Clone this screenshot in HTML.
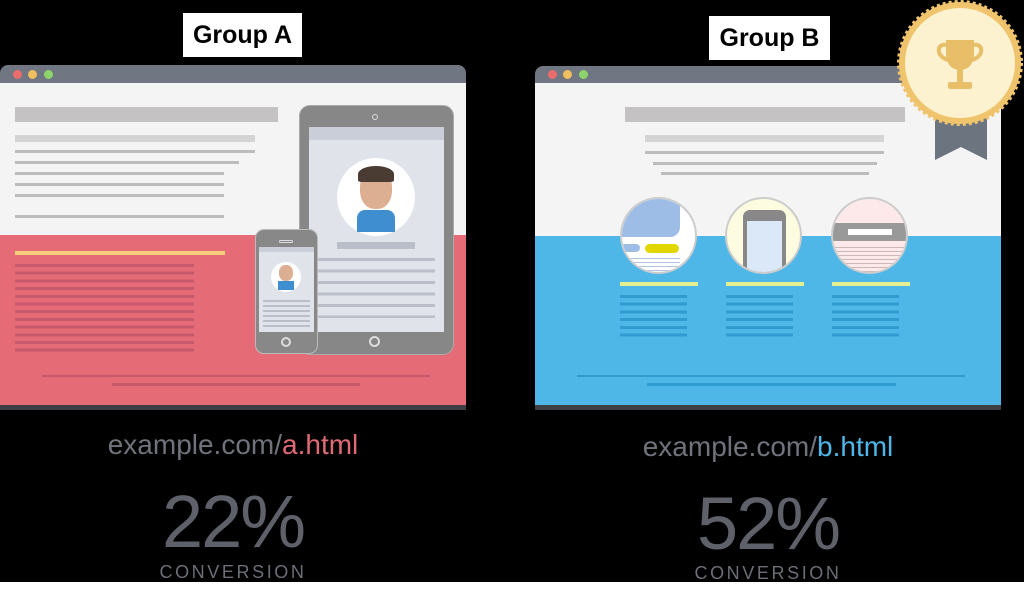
<!DOCTYPE html>
<html><head><style>
*{margin:0;padding:0;box-sizing:border-box}
body{width:1024px;height:601px;background:#fff;position:relative;overflow:hidden;font-family:"Liberation Sans",sans-serif}
#bk{position:absolute;left:0;top:0;width:1024px;height:582px;background:#000}
.a{position:absolute}
.lbl{position:absolute;background:#fff;color:#000;font-weight:bold;font-size:25px;text-align:center;line-height:44px}
.url{position:absolute;width:466px;text-align:center;font-size:28px;color:#70737c;font-weight:300}
.pct{position:absolute;width:466px;text-align:center;font-size:74px;color:#5e6169;font-weight:100;line-height:78px;letter-spacing:-2px}
.conv{position:absolute;width:466px;text-align:center;font-size:18px;color:#6c6f78;letter-spacing:2.6px;line-height:20px}
.dot{position:absolute;width:9px;height:9px;border-radius:50%;top:70px}
</style></head><body>
<div id="bk"></div>
<div class="lbl" style="left:183px;top:13px;width:119px">Group A</div>
<div class="lbl" style="left:709px;top:16px;width:121px">Group B</div>

<!-- left browser -->
<div class="a" style="left:0;top:65px;width:466px;height:20px;background:#707682;border-radius:8px 8px 0 0"></div>
<div class="dot" style="left:13px;background:#ec6b6b"></div><div class="dot" style="left:28px;background:#f0c060"></div><div class="dot" style="left:44px;background:#8ed46c"></div>
<div class="a" style="left:0;top:83px;width:466px;height:152px;background:#f4f4f4"></div>
<div class="a" style="left:0;top:235px;width:466px;height:170px;background:#e56b76"></div>
<div class="a" style="left:0;top:405px;width:466px;height:5px;background:#3d3f44"></div>
<div class="a" style="left:15px;top:107px;width:263px;height:15px;background:#c4c2c2"></div>
<div class="a" style="left:15px;top:135px;width:240px;height:7px;background:#d4d4d4"></div>
<div class="a" style="left:15px;top:150px;width:240px;height:3px;background:#bcbcbc"></div>
<div class="a" style="left:15px;top:161px;width:224px;height:3px;background:#bcbcbc"></div>
<div class="a" style="left:15px;top:172px;width:209px;height:3px;background:#bcbcbc"></div>
<div class="a" style="left:15px;top:183px;width:209px;height:3px;background:#bcbcbc"></div>
<div class="a" style="left:15px;top:194px;width:209px;height:3px;background:#bcbcbc"></div>
<div class="a" style="left:15px;top:215px;width:209px;height:3px;background:#bcbcbc"></div>
<div class="a" style="left:15px;top:251px;width:210px;height:4px;background:#f7cf7c"></div>
<div class="a" style="left:15px;top:264px;width:179px;height:90px;background:repeating-linear-gradient(#c45a6c 0 3px,transparent 3px 7.7px)"></div>
<div class="a" style="left:42px;top:375px;width:388px;height:2px;background:#c45a6c"></div>
<div class="a" style="left:112px;top:383px;width:248px;height:3px;background:#c45a6c"></div>
<!-- tablet -->
<div class="a" style="left:299px;top:105px;width:155px;height:250px;background:#878787;border-radius:11px;border:1px solid #aaa"></div>
<div class="a" style="left:372px;top:114px;width:6px;height:6px;border-radius:50%;border:1px solid #ddd"></div>
<div class="a" style="left:309px;top:127px;width:135px;height:205px;background:#e0e3ea"></div>
<div class="a" style="left:309px;top:127px;width:135px;height:13px;background:#c9ced8"></div>
<div class="a" style="left:337px;top:158px;width:78px;height:78px;border-radius:50%;background:#fff"></div>
<div class="a" style="left:360px;top:169px;width:32px;height:40px;border-radius:45%;background:#dcae92"></div>
<div class="a" style="left:358px;top:166px;width:36px;height:16px;border-radius:50% 50% 10% 10%;background:#4a3b33"></div>
<div class="a" style="left:357px;top:210px;width:38px;height:22px;border-radius:8px 8px 0 0;background:#3f8fd0"></div>
<div class="a" style="left:337px;top:242px;width:78px;height:7px;background:#b9bec8"></div>
<div class="a" style="left:318px;top:258px;width:117px;height:60px;background:repeating-linear-gradient(#b9bec8 0 3px,transparent 3px 11.5px)"></div>
<div class="a" style="left:369px;top:336px;width:11px;height:11px;border-radius:50%;border:2px solid #ddd"></div>
<!-- phone -->
<div class="a" style="left:255px;top:229px;width:63px;height:125px;background:#888;border-radius:9px;border:1px solid #bbb"></div>
<div class="a" style="left:279px;top:240px;width:14px;height:3px;border-radius:2px;border:1px solid #ddd"></div>
<div class="a" style="left:259px;top:247px;width:55px;height:85px;background:#e0e3ea"></div>
<div class="a" style="left:259px;top:247px;width:55px;height:5px;background:#c9ced8"></div>
<div class="a" style="left:271px;top:262px;width:30px;height:30px;border-radius:50%;background:#fff"></div>
<div class="a" style="left:279px;top:265px;width:14px;height:16px;border-radius:45%;background:#dcae92"></div>
<div class="a" style="left:278px;top:281px;width:16px;height:9px;background:#3f8fd0"></div>
<div class="a" style="left:263px;top:300px;width:47px;height:28px;background:repeating-linear-gradient(#b9bec8 0 2px,transparent 2px 5px)"></div>
<div class="a" style="left:281px;top:337px;width:10px;height:10px;border-radius:50%;border:2px solid #ddd"></div>

<!-- right browser -->
<div class="a" style="left:535px;top:66px;width:466px;height:19px;background:#707682;border-radius:8px 8px 0 0"></div>
<div class="dot" style="left:548px;background:#ec6b6b"></div><div class="dot" style="left:563px;background:#f0c060"></div><div class="dot" style="left:579px;background:#8ed46c"></div>
<div class="a" style="left:535px;top:83px;width:466px;height:153px;background:#f4f4f4"></div>
<div class="a" style="left:535px;top:236px;width:466px;height:169px;background:#4fb6e8"></div>
<div class="a" style="left:535px;top:405px;width:466px;height:5px;background:#3d3f44"></div>
<div class="a" style="left:625px;top:107px;width:280px;height:15px;background:#c4c2c2"></div>
<div class="a" style="left:645px;top:135px;width:239px;height:7px;background:#d4d4d4"></div>
<div class="a" style="left:645px;top:151px;width:239px;height:3px;background:#bcbcbc"></div>
<div class="a" style="left:653px;top:162px;width:224px;height:3px;background:#bcbcbc"></div>
<div class="a" style="left:661px;top:172px;width:208px;height:3px;background:#bcbcbc"></div>
<div class="a" style="left:620px;top:197px;width:77px;height:77px;border-radius:50%;background:#fff;border:2px solid #ccc;overflow:hidden">
 <div class="a" style="left:0;top:0;width:58px;height:38px;background:#9dbde6;border-radius:0 0 10px 0"></div>
 <div class="a" style="left:-2px;top:45px;width:20px;height:8px;background:#9dbde6;border-radius:4px"></div>
 <div class="a" style="left:23px;top:45px;width:34px;height:9px;background:#e2d600;border-radius:5px"></div>
 <div class="a" style="left:0;top:59px;width:58px;height:14px;background:repeating-linear-gradient(#b0c4e0 0 1px,transparent 1px 4px)"></div>
</div>
<div class="a" style="left:725px;top:197px;width:77px;height:77px;border-radius:50%;background:#fdfbe0;border:2px solid #ccc;overflow:hidden">
 <div class="a" style="left:16px;top:11px;width:43px;height:70px;background:#888;border-radius:7px"></div>
 <div class="a" style="left:20px;top:22px;width:35px;height:60px;background:#dbe8f8"></div>
</div>
<div class="a" style="left:831px;top:197px;width:77px;height:77px;border-radius:50%;background:#fde9ea;border:2px solid #ccc;overflow:hidden">
 <div class="a" style="left:0;top:24px;width:77px;height:18px;background:#999"></div>
 <div class="a" style="left:15px;top:30px;width:44px;height:6px;background:#fff"></div>
 <div class="a" style="left:0;top:48px;width:77px;height:26px;background:repeating-linear-gradient(#c8b8b8 0 1px,transparent 1px 4px)"></div>
</div>
<div class="a" style="left:620px;top:282px;width:78px;height:4px;background:#e4f08f"></div>
<div class="a" style="left:726px;top:282px;width:78px;height:4px;background:#e4f08f"></div>
<div class="a" style="left:832px;top:282px;width:78px;height:4px;background:#e4f08f"></div>
<div class="a" style="left:620px;top:295px;width:67px;height:42px;background:repeating-linear-gradient(#2f9bd0 0 3px,transparent 3px 7.7px)"></div>
<div class="a" style="left:726px;top:295px;width:67px;height:42px;background:repeating-linear-gradient(#2f9bd0 0 3px,transparent 3px 7.7px)"></div>
<div class="a" style="left:832px;top:295px;width:67px;height:42px;background:repeating-linear-gradient(#2f9bd0 0 3px,transparent 3px 7.7px)"></div>
<div class="a" style="left:577px;top:375px;width:388px;height:2px;background:#2f9bd0"></div>
<div class="a" style="left:647px;top:383px;width:249px;height:3px;background:#2f9bd0"></div>
<!-- badge -->
<svg class="a" style="left:895px;top:0" width="129" height="165" viewBox="0 0 129 165">
 <polygon points="40,115 92,115 92,160 66,147 40,160" fill="#6c7480"/>
 <circle cx="65" cy="63" r="61" fill="#efc46c" stroke="#efc46c" stroke-width="4" stroke-dasharray="3 3"/>
 <circle cx="65" cy="63" r="55" fill="#fdf2cf"/>
 <path d="M51 40h28v14c0 10-6 16-14 16s-14-6-14-16z" fill="#e8bf68"/>
 <path d="M51 45c-9-2-11 11 2 15M79 45c9-2 11 11-2 15" fill="none" stroke="#e8bf68" stroke-width="4"/>
 <rect x="62" y="69" width="6" height="13" fill="#e8bf68"/>
 <rect x="53" y="82" width="24" height="7" rx="2" fill="#e8bf68"/>
</svg>

<div class="url" style="left:0;top:429px">example.com/<span style="color:#e06a75">a.html</span></div>
<div class="url" style="left:535px;top:431px">example.com/<span style="color:#4fb6e8">b.html</span></div>
<div class="pct" style="left:0;top:483px">22%</div>
<div class="pct" style="left:535px;top:485px">52%</div>
<div class="conv" style="left:0;top:562px">CONVERSION</div>
<div class="conv" style="left:535px;top:563px">CONVERSION</div>
</body></html>
